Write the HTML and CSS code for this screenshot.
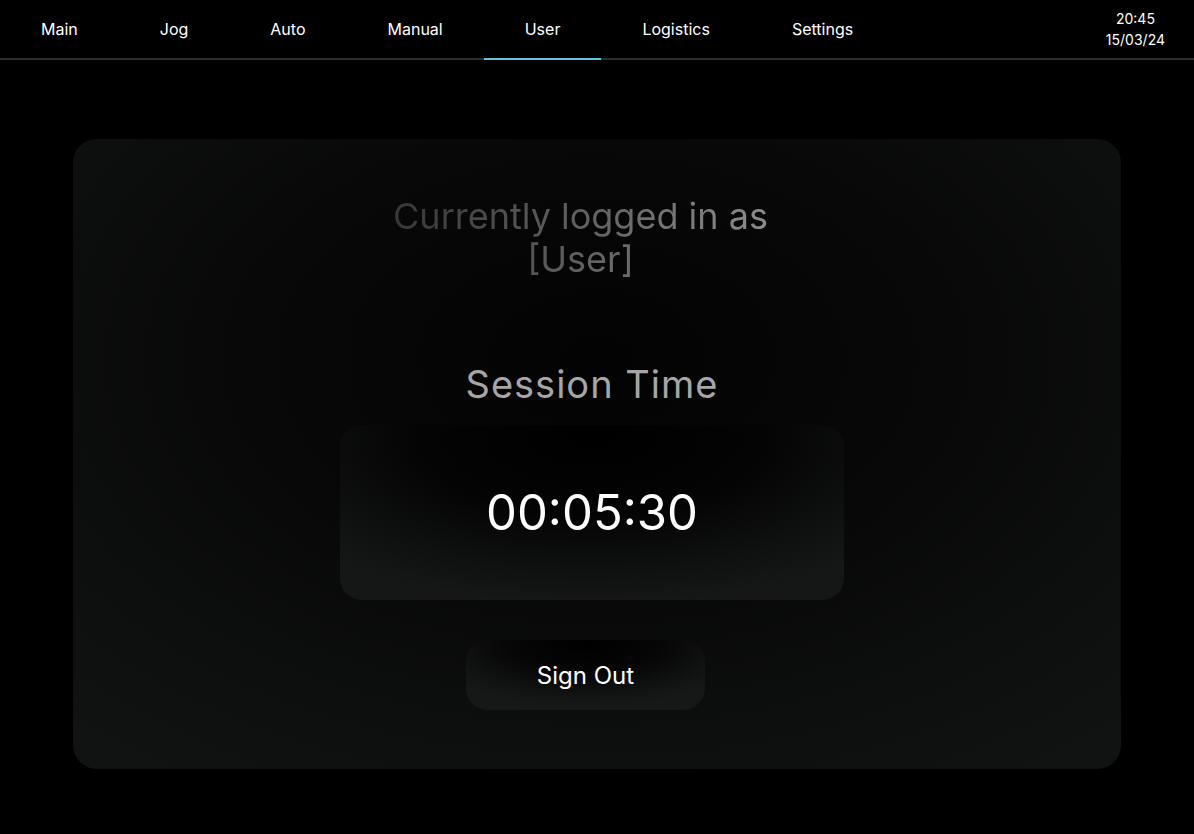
FILE: index.html
```html
<!DOCTYPE html>
<html lang="en">
<head>
<meta charset="utf-8">
<title>User</title>
<link rel="stylesheet" href="styles.css">
</head>
<body>
<header class="nav">
  <nav class="tabs">
    <a class="tab">Main</a>
    <a class="tab">Jog</a>
    <a class="tab">Auto</a>
    <a class="tab">Manual</a>
    <a class="tab active">User</a>
    <a class="tab">Logistics</a>
    <a class="tab">Settings</a>
  </nav>
  <div class="clock">
    <div>20:45</div>
    <div>15/03/24</div>
  </div>
</header>
<main class="page">
  <section class="card">
    <h1 class="logged">Currently logged in as<br>[User]</h1>
    <h2 class="session-label">Session Time</h2>
    <div class="timer">00:05:30</div>
    <button class="signout">Sign Out</button>
  </section>
</main>
</body>
</html>
```

FILE: styles.css
```css
html, body {
  margin: 0;
  padding: 0;
  background: #000;
  color: #fff;
  font-family: Inter, "Noto Sans", "Liberation Sans", sans-serif;
}

.nav {
  height: 58px;
  display: flex;
  align-items: stretch;
  justify-content: space-between;
  border-bottom: 2px solid #2f2f2f;
}

.tabs {
  display: flex;
  align-items: stretch;
}

.tab {
  display: flex;
  align-items: center;
  padding: 0 41px;
  font-size: 16px;
  color: #fff;
  margin-bottom: -2px;
  border-bottom: 2px solid transparent;
}

.tab.active {
  border-bottom-color: #5cc7de;
}

.clock {
  display: flex;
  flex-direction: column;
  justify-content: center;
  align-items: center;
  padding-right: 29px;
  font-size: 14px;
  line-height: 21px;
}

.page {
  padding: 79px 73px 65px;
}

.card {
  height: 630px;
  box-sizing: border-box;
  border-radius: 24px;
  background: radial-gradient(ellipse 75% 80% at 50% 35%, #030303 0%, #080808 45%, #111313 100%);
  display: flex;
  flex-direction: column;
  align-items: center;
  padding-top: 56px;
}

.logged {
  margin: 0 33px 0 0;
  font-size: 36px;
  font-weight: 400;
  line-height: 43px;
  text-align: center;
  background: linear-gradient(90deg, #363636 0%, #606060 50%, #8c8c8c 100%);
  -webkit-background-clip: text;
  background-clip: text;
  color: transparent;
}

.session-label {
  margin: 82px 10px 0 0;
  font-size: 38px;
  font-weight: 400;
  line-height: 43px;
  letter-spacing: 1px;
  color: #a6a6a6;
}

.timer {
  margin: 19px 10px 0 0;
  width: 504px;
  height: 175px;
  border-radius: 22px;
  display: flex;
  align-items: center;
  justify-content: center;
  font-size: 49px;
  color: #fff;
  background: radial-gradient(ellipse 75% 95% at 50% 8%, #000 0%, #040404 45%, #0f1010 80%, #151717 100%);
}

.signout {
  margin: 40px 23px 0 0;
  width: 239px;
  height: 70px;
  border: none;
  border-radius: 22px;
  font-family: inherit;
  font-size: 24px;
  color: #fff;
  background: radial-gradient(ellipse 70% 90% at 50% 5%, #000 0%, #060606 45%, #111212 80%, #161818 100%);
}
```
